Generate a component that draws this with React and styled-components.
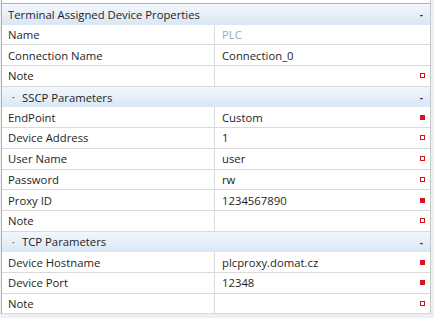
import React from 'react'
import styled, { createGlobalStyle } from 'styled-components'

const GlobalStyle = createGlobalStyle`
  html, body {
    margin: 0;
    padding: 0;
    background: #f0f0f0;
  }
  body {
    font-family: 'Open Sans', 'Noto Sans', sans-serif;
    font-size: 11.3px;
    color: #1e1e1e;
  }
`

const Page = styled.div`
  width: 434px;
  height: 318px;
  overflow: hidden;
  padding-left: 1px;
  box-sizing: border-box;
`

const Panel = styled.div`
  width: 430px;
  background: #fff;
  border-left: 1px solid #a9b0b8;
  border-right: 1px solid #c8c8c8;
  box-sizing: border-box;
`

const TopStrip = styled.div`
  height: 3px;
  border-bottom: 1px solid #a9b0b8;
`

const Row = styled.div`
  display: grid;
  grid-template-columns: 213px 1fr;
  height: 20.7px;
  box-sizing: border-box;
  border-bottom: 1px solid #dadada;
  align-items: center;
`

const GroupRow = styled.div`
  display: flex;
  align-items: center;
  height: 20.7px;
  box-sizing: border-box;
  padding-left: ${p => (p.$sub ? '10px' : '6px')};
  padding-right: 7px;
  background: linear-gradient(#f3f7fc, #dae6f5);
`

const GroupTitle = styled.span`
  flex: 1;
  white-space: nowrap;
`

const Bullet = styled.span`
  width: 10px;
  font-size: 10px;
`

const Collapse = styled.span`
  font-size: 10px;
  font-weight: bold;
  color: #333;
`

const Label = styled.div`
  padding-left: 6px;
  height: 100%;
  display: flex;
  align-items: center;
  border-right: 1px solid #dadada;
  white-space: nowrap;
`

const Value = styled.div`
  display: flex;
  align-items: center;
  padding-left: 7px;
  padding-right: 4px;
  color: ${p => (p.$muted ? '#a8a8a8' : '#1e1e1e')};
`

const ValueText = styled.span`
  flex: 1;
  white-space: nowrap;
`

const Marker = styled.span`
  width: 5px;
  height: 5px;
  box-sizing: border-box;
  margin-right: 1px;
  background: ${p => (p.$filled ? '#e3131b' : '#fff')};
  border: 1px solid #d0141b;
`

const groups = [
  {
    title: 'Terminal Assigned Device Properties',
    top: true,
    rows: [
      { label: 'Name', value: 'PLC', muted: true },
      { label: 'Connection Name', value: 'Connection_0' },
      { label: 'Note', value: '', marker: 'empty' },
    ],
  },
  {
    title: 'SSCP Parameters',
    rows: [
      { label: 'EndPoint', value: 'Custom', marker: 'filled' },
      { label: 'Device Address', value: '1', marker: 'empty' },
      { label: 'User Name', value: 'user', marker: 'empty' },
      { label: 'Password', value: 'rw', marker: 'empty' },
      { label: 'Proxy ID', value: '1234567890', marker: 'filled' },
      { label: 'Note', value: '', marker: 'empty' },
    ],
  },
  {
    title: 'TCP Parameters',
    rows: [
      { label: 'Device Hostname', value: 'plcproxy.domat.cz', marker: 'filled' },
      { label: 'Device Port', value: '12348', marker: 'filled' },
      { label: 'Note', value: '', marker: 'empty' },
    ],
  },
]

export default function App() {
  return (
    <Page>
      <GlobalStyle />
      <Panel>
        <TopStrip />
        {groups.map(g => (
          <React.Fragment key={g.title}>
            <GroupRow $sub={!g.top}>
              {!g.top && <Bullet>·</Bullet>}
              <GroupTitle>{g.title}</GroupTitle>
              <Collapse>-</Collapse>
            </GroupRow>
            {g.rows.map((r, i) => (
              <Row key={i}>
                <Label>{r.label}</Label>
                <Value $muted={r.muted}>
                  <ValueText>{r.value}</ValueText>
                  {r.marker && <Marker $filled={r.marker === 'filled'} />}
                </Value>
              </Row>
            ))}
          </React.Fragment>
        ))}
      </Panel>
    </Page>
  )
}
